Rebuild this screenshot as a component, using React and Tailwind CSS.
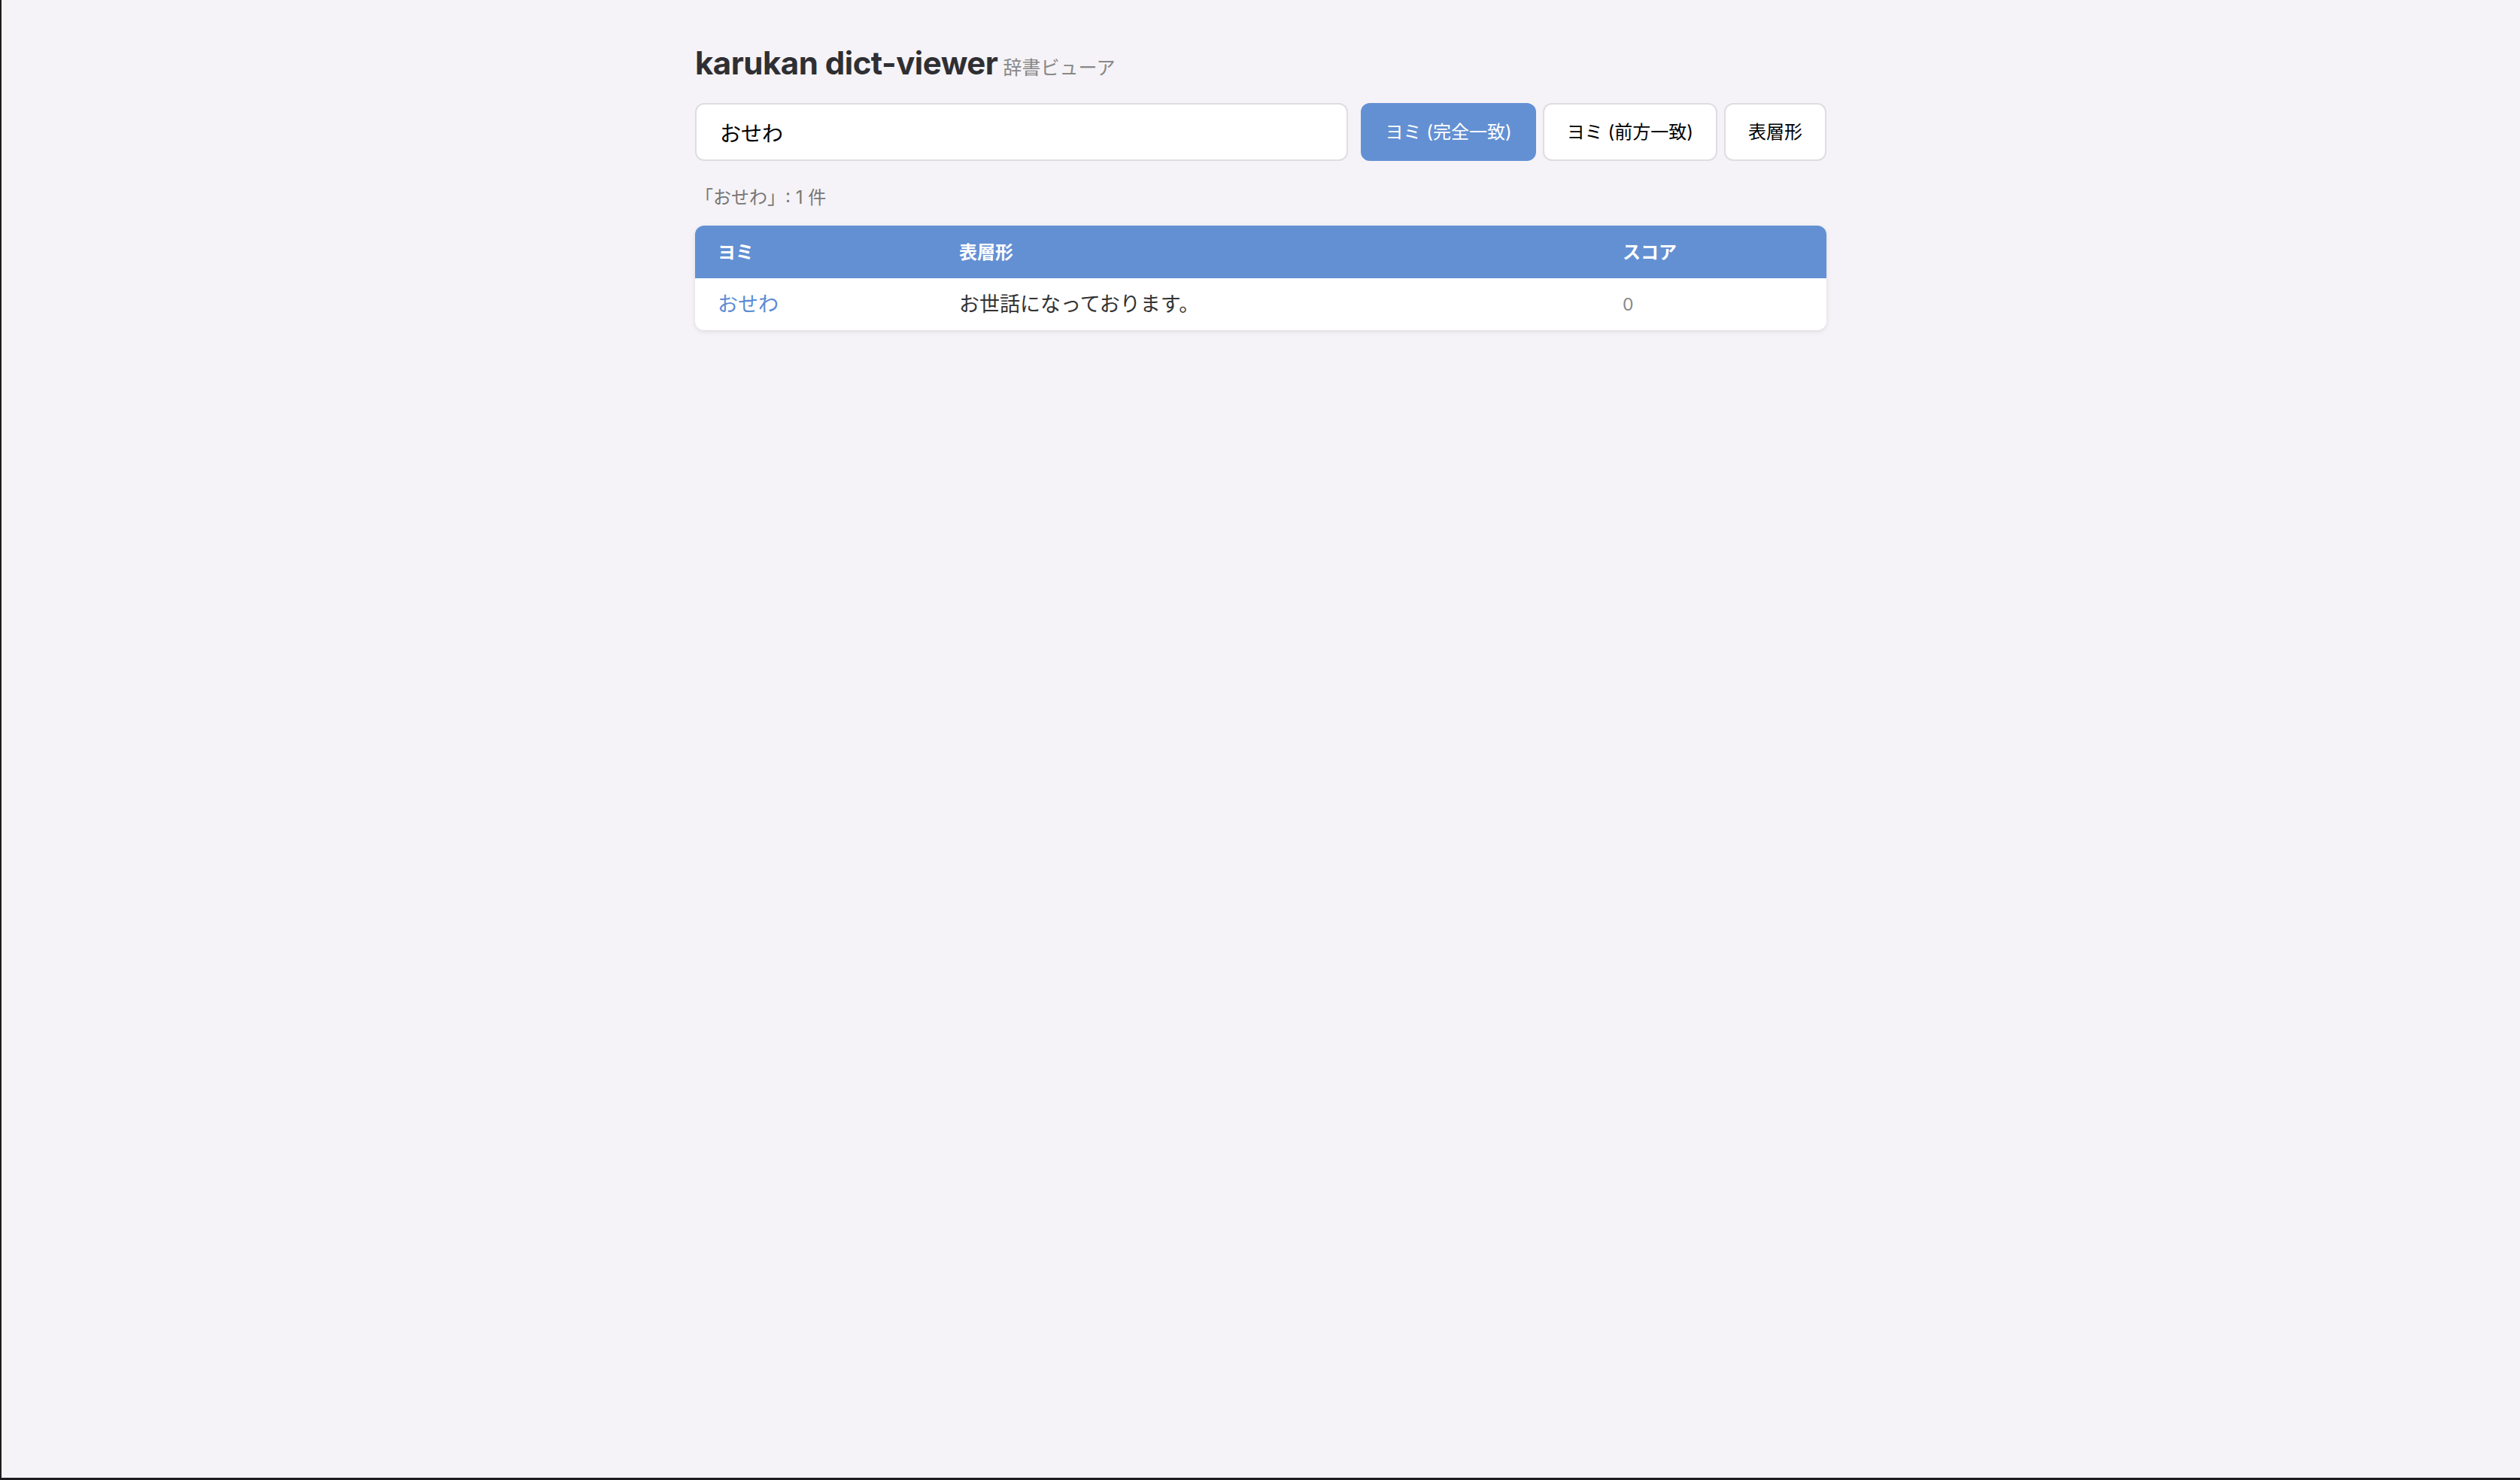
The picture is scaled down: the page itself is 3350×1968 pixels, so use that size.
import React, { useState } from 'react';

const rows = [
  { yomi: 'おせわ', surface: 'お世話になっております。', score: 0 },
];

const modes = [
  { key: 'exact', label: 'ヨミ (完全一致)' },
  { key: 'prefix', label: 'ヨミ (前方一致)' },
  { key: 'surface', label: '表層形' },
];

export default function App() {
  const [query, setQuery] = useState('おせわ');
  const [mode, setMode] = useState('exact');

  return (
    <div className="w-full h-[1968px] box-border border-l-2 border-b-[3px] border-[#1c1c1e] bg-[#f5f3f7] font-['Inter','Noto_Sans_CJK_JP',sans-serif] text-[#333]">
      <div className="mx-auto w-[1504px] pt-[54px]">
        <h1 className="flex items-baseline gap-[7px] h-[60px] leading-[60px] mb-[23px]">
          <span className="text-[42px] font-bold tracking-[-0.012em] text-[#2f2f33]">karukan dict-viewer</span>
          <span className="text-[25px] font-normal text-[#888]">辞書ビューア</span>
        </h1>

        <div className="flex h-[77px]">
          <input
            value={query}
            onChange={(e) => setQuery(e.target.value)}
            className="flex-1 mr-[17px] h-full box-border border-2 border-[#dedde2] rounded-[12px] bg-white px-[31px] text-[28px] text-black outline-none"
          />
          <div className="flex gap-[9px]">
            {modes.map((m) => (
              <button
                key={m.key}
                onClick={() => setMode(m.key)}
                className={`h-full box-border rounded-[12px] px-[30px] text-[24px] border-2 ${mode === m.key ? 'bg-[#6390d3] border-[#6390d3] text-white' : 'bg-white border-[#dedde2] text-black'}`}
              >
                {m.label}
              </button>
            ))}
          </div>
        </div>

        <p className="mt-[31px] mb-[19px] text-[24px] leading-[36px] text-[#777]">「{query}」: {rows.length} 件</p>

        <div className="rounded-[12px] overflow-hidden bg-white shadow-[0_2px_6px_rgba(0,0,0,0.1)]">
          <div className="grid grid-cols-[320px_882px_1fr] h-[70px] pt-[2px] items-center bg-[#6390d3] text-white font-bold text-[24px]">
            <div className="pl-[30px]">ヨミ</div>
            <div className="pl-[31px]">表層形</div>
            <div className="pl-[31px]">スコア</div>
          </div>
          {rows.map((r, i) => (
            <div key={i} className="grid grid-cols-[320px_882px_1fr] h-[69px] pt-[2px] items-center">
              <div className="pl-[30px] text-[27px] text-[#5b8bd4]">{r.yomi}</div>
              <div className="pl-[31px] text-[27px] text-[#333]">{r.surface}</div>
              <div className="pl-[31px] text-[23px] text-[#888]">{r.score}</div>
            </div>
          ))}
        </div>
      </div>
    </div>
  );
}
